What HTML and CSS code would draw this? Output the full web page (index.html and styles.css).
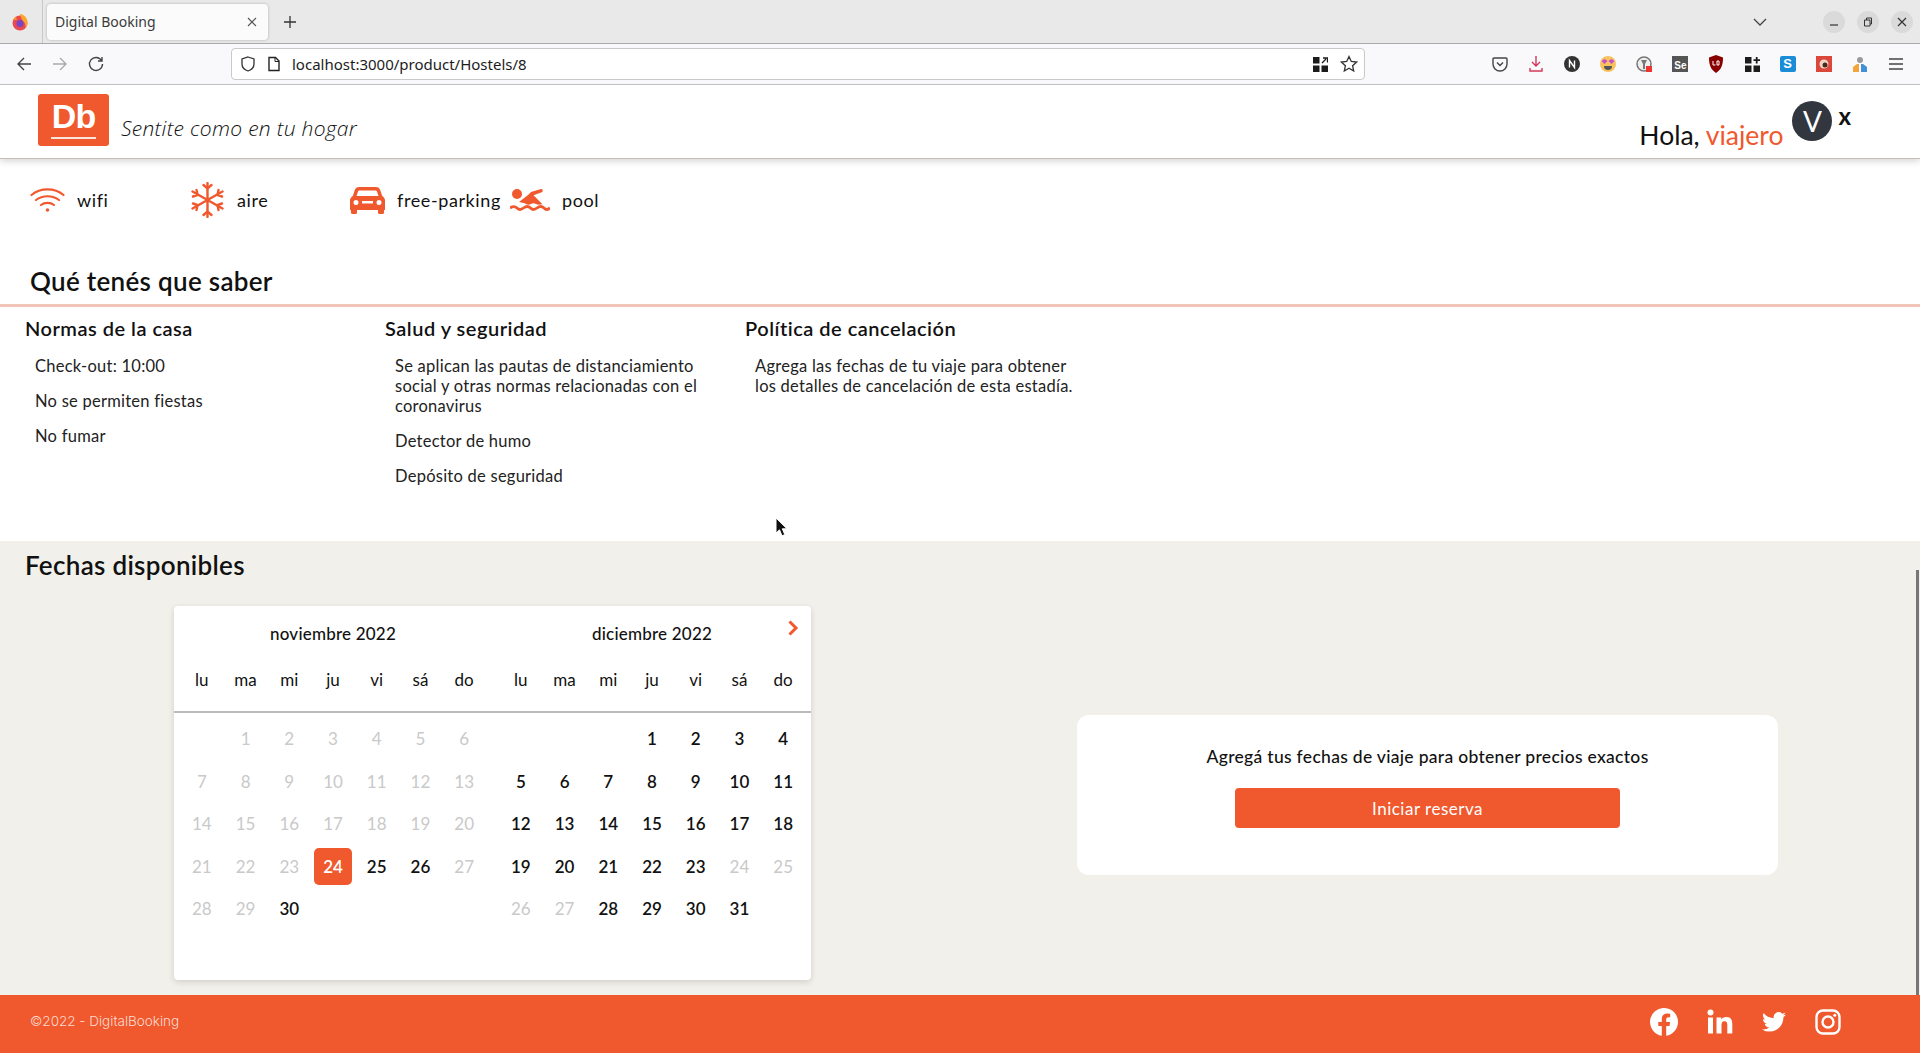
FILE: index.html
```html
<!DOCTYPE html>
<html lang="es">
<head>
    <meta charset="UTF-8">
    <meta name="viewport" content="width=device-width, initial-scale=1.0">
    <title>Digital Booking</title>
    <link rel="stylesheet" href="styles.css">
</head>
<body>
    <!-- browser chrome -->
    <div class="tabbar">
        <div class="tabbar-left">
            <svg class="ff-logo" width="20" height="20" viewBox="0 0 20 20"><circle cx="10" cy="11" r="7.5" fill="#e8484f"/><path d="M10 2c4.500 .5 7.500 4 7.500 9 0 2-1 4-2.500 5.300 1-2 .5-5-1.500-6.800C12 7.800 10.500 5 10 2z" fill="#ffa52c"/><path d="M3 8c1-2 2-3 3.500-4-.5 2 0 3 1 4z" fill="#ff8a2c"/><circle cx="10" cy="11.500" r="3.500" fill="#7a45c5"/></svg>
        </div>
        <div class="tab">
            <span class="tab-title">Digital Booking</span>
            <svg width="10" height="10" viewBox="0 0 10 10"><path d="M1 1l8 8M9 1l-8 8" stroke="#555" stroke-width="1.100"/></svg>
        </div>
        <svg class="new-tab" width="14" height="14" viewBox="0 0 14 14"><path d="M7 1v12M1 7h12" stroke="#333" stroke-width="1.300"/></svg>
        <div class="tabbar-right">
            <svg class="tabs-list" width="14" height="8" viewBox="0 0 14 8"><path d="M1 1l6 6 6-6" fill="none" stroke="#444" stroke-width="1.300"/></svg>
            <span class="win-btn"><svg width="10" height="10" viewBox="0 0 10 10"><path d="M1 8h8" stroke="#333" stroke-width="1.200"/></svg></span>
            <span class="win-btn"><svg width="10" height="10" viewBox="0 0 10 10"><path d="M1.500 3h5.500v6h-5.500zM3.500 3v-2h5v6h-1.500" fill="none" stroke="#333"/></svg></span>
            <span class="win-btn"><svg width="10" height="10" viewBox="0 0 10 10"><path d="M1 1l8 8M9 1l-8 8" stroke="#333" stroke-width="1.200"/></svg></span>
        </div>
    </div>

    <div class="toolbar">
        <div class="nav-btns">
            <svg width="16" height="16" viewBox="0 0 16 16"><path d="M15 8H2M8 2L2 8l6 6" fill="none" stroke="#444" stroke-width="1.400"/></svg>
            <svg width="16" height="16" viewBox="0 0 16 16"><path d="M1 8h13M8 2l6 6-6 6" fill="none" stroke="#aaa" stroke-width="1.400"/></svg>
            <svg width="16" height="16" viewBox="0 0 16 16"><path d="M13.500 4.500A6.500 6.500 0 1 0 14.500 8M14 1v4h-4" fill="none" stroke="#444" stroke-width="1.400"/></svg>
        </div>
        <div class="urlbar">
            <svg width="16" height="16" viewBox="0 0 16 16"><path d="M8 1l6 2v5c0 3.500-3 6-6 7-3-1-6-3.500-6-7V3z" fill="none" stroke="#333" stroke-width="1.300"/></svg>
            <svg width="14" height="16" viewBox="0 0 14 16"><path d="M2 1.500h6.500L12 5v9.500H2z" fill="none" stroke="#222" stroke-width="1.400"/><path d="M8 1.500V5.500h4" fill="none" stroke="#222"/></svg>
            <span class="url">localhost:3000/product/Hostels/8</span>
            <div class="urlbar-end">
                <svg width="15" height="15" viewBox="0 0 15 15" fill="#1c1c1c"><rect width="6.500" height="6.500"/><rect y="8.500" width="6.500" height="6.500"/><rect x="8.500" y="8.500" width="6.500" height="6.500"/><path d="M9 6l4-4M10 1h4.500v4.500" stroke="#1c1c1c" stroke-width="1.300" fill="none"/></svg>
                <svg width="18" height="18" viewBox="0 0 18 18"><path d="M9 1.500l2.300 5 5.300.6-4 3.600 1.100 5.300L9 13.300 4.300 16l1.100-5.300-4-3.600 5.300-.6z" fill="none" stroke="#333" stroke-width="1.300"/></svg>
            </div>
        </div>
        <div class="ext-icons">
            <svg width="16" height="16" viewBox="0 0 16 16"><path d="M2 2h12a1 1 0 0 1 1 1v5a7 7 0 0 1-14 0V3a1 1 0 0 1 1-1z" fill="none" stroke="#444" stroke-width="1.400"/><path d="M5 6.500l3 3 3-3" fill="none" stroke="#444" stroke-width="1.400"/></svg>
            <svg width="16" height="18" viewBox="0 0 16 18"><path d="M8 1v10M4 7l4 4 4-4M2 13v3h12v-3" fill="none" stroke="#d5385a" stroke-width="1.400"/></svg>
            <svg width="16" height="16" viewBox="0 0 16 16"><circle cx="8" cy="8" r="8" fill="#333"/><path d="M5.500 11.500v-7l5 7v-7" fill="none" stroke="#fff" stroke-width="1.400"/></svg>
            <svg width="16" height="16" viewBox="0 0 16 16"><circle cx="8" cy="8" r="8" fill="#f7c35f"/><path d="M1.500 5l3-2 3 2-3 3zM8.500 5l3-2 3 2-3 3z" fill="#c94fc9"/><path d="M4 10h8a4 4 0 0 1-8 0z" fill="#555"/></svg>
            <svg width="16" height="16" viewBox="0 0 16 16"><circle cx="8" cy="8" r="7" fill="#eee" stroke="#777" stroke-width="1.500"/><path d="M5 4h6l-2 4v5H7V8z" fill="#777"/><rect x="10" y="10" width="6" height="6" fill="#e33"/></svg>
            <span class="ext-se">Se</span>
            <svg width="16" height="18" viewBox="0 0 16 18"><path d="M8 0l7 2.500c0 7-1.500 12-7 15.500C2.500 14.500 1 9.500 1 2.500z" fill="#800"/><path d="M5 6v4h2.500M9 6h2v4H9z" fill="none" stroke="#fff" stroke-width="1"/></svg>
            <svg width="15" height="15" viewBox="0 0 15 15" fill="#1c1c1c"><rect width="6.500" height="6.500"/><rect y="8.500" width="6.500" height="6.500"/><rect x="8.500" y="8.500" width="6.500" height="6.500"/><path d="M11.700 0v6.500M8.500 3.200h6.500" stroke="#1c1c1c" stroke-width="1.800"/></svg>
            <span class="ext-s">S</span>
            <svg width="16" height="16" viewBox="0 0 16 16"><rect width="16" height="16" fill="#d9483b"/><circle cx="8" cy="8" r="4.500" fill="#f3d5c8"/><circle cx="9" cy="9" r="2.500" fill="#4a2a20"/></svg>
            <svg width="16" height="18" viewBox="0 0 16 18"><circle cx="8" cy="5" r="3" fill="#9a9a9a"/><path d="M1 17v-5l4-3h2v8z" fill="#f2a53a"/><path d="M15 17v-5l-4-3H9v8z" fill="#3f8fd9"/></svg>
            <svg width="16" height="12" viewBox="0 0 16 12"><path d="M1 1h14M1 6h14M1 11h14" stroke="#444" stroke-width="1.300"/></svg>
        </div>
    </div>

    <!-- app -->
    <header class="site-header">
        <div class="logo">
            <span class="logo-text">Db</span>
        </div>
        <span class="slogan">Sentite como en tu hogar</span>
        <div class="user">
            <span class="greeting">Hola, <span class="accent">viajero</span></span>
            <span class="avatar">V</span>
            <span class="logout">x</span>
        </div>
    </header>

    <main class="page">
        <section class="features">
            <div class="feature">
                <svg width="35" height="26" viewBox="0 0 35 26" fill="none" stroke="#f0582d" stroke-width="2.200" stroke-linecap="round"><path d="M1.500 8c9-7.500 23-7.500 32 0"/><path d="M6 13c6.500-5 16.500-5 23 0"/><path d="M11 18c3.500-2.800 9.500-2.800 13 0"/><circle cx="17.500" cy="23" r="1.800" fill="#f0582d" stroke="none"/></svg>
                <span>wifi</span>
            </div>
            <div class="feature">
                <svg width="35" height="36" viewBox="0 0 34 36" fill="none" stroke="#f0582d" stroke-width="2.400" stroke-linecap="round"><path d="M17 1v34M2 9.500l30 17M32 9.500l-30 17"/><path d="M13 3l4 3.500L21 3M13 33l4-3.500 4 3.500M2.500 14.500l4.500-1.500-1-5M31.500 14.500l-4.500-1.500 1-5M2.500 21.500l4.500 1.500-1 5M31.500 21.500l-4.500 1.500 1 5"/></svg>
                <span>aire</span>
            </div>
            <div class="feature">
                <svg width="35" height="28" viewBox="0 0 35 28" fill="#f0582d"><path fill-rule="evenodd" d="M9 1h17c2 0 3.500 1 4.200 3l2 6c1.500 1 2.800 2.500 2.800 4.500V24h-1v2.500a1.500 1.500 0 0 1-1.500 1.500h-3a1.500 1.500 0 0 1-1.500-1.500V24H7v2.500A1.500 1.500 0 0 1 5.500 28h-3A1.500 1.500 0 0 1 1 26.500V24H0v-9.500C0 12.500 1.300 11 2.800 10l2-6C5.500 2 7 1 9 1zm.5 3.500c-.8 0-1.300.4-1.500 1L6.500 10h22L27 5.500c-.2-.6-.7-1-1.500-1zM6 14a2.500 2.500 0 1 0 0 5 2.500 2.500 0 0 0 0-5zm23 0a2.500 2.500 0 1 0 0 5 2.500 2.500 0 0 0 0-5zm-17 1v2.500h11V15z"/></svg>
                <span>free-parking</span>
            </div>
            <div class="feature">
                <svg width="40" height="24" viewBox="0 0 40 24" fill="#f0582d"><circle cx="7" cy="6" r="5"/><path d="M9 14l9-7 3-3 10-3c1.500-.4 2.500 2.500.8 3.200l-8.300 3 9 9-4 .5c-2 0-3-1.500-5-1.500s-3 1.500-5 1.500-2-1-4-1.500z"/><path d="M0 20c3-2 5-2 7 0s4 2 6.500 0 5-2 7 0 4 2 6.500 0 5-2 7 0 3 2 6 0" fill="none" stroke="#f0582d" stroke-width="2.800"/></svg>
                <span>pool</span>
            </div>
        </section>

        <section class="policies">
            <h2 class="policies-title">Qué tenés que saber</h2>
            <div class="policies-cols">
                <div class="policy">
                    <h3>Normas de la casa</h3>
                    <p>Check-out: 10:00</p>
                    <p>No se permiten fiestas</p>
                    <p>No fumar</p>
                </div>
                <div class="policy">
                    <h3>Salud y seguridad</h3>
                    <p>Se aplican las pautas de distanciamiento social y otras normas relacionadas con el coronavirus</p>
                    <p>Detector de humo</p>
                    <p>Depósito de seguridad</p>
                </div>
                <div class="policy">
                    <h3>Política de cancelación</h3>
                    <p>Agrega las fechas de tu viaje para obtener los detalles de cancelación de esta estadía.</p>
                </div>
            </div>
            <svg class="mouse-cursor" width="13" height="20" viewBox="0 0 13 20"><path d="M1 1v15l3.500-3.200 2.500 6 2.800-1.200-2.500-5.800H12z" fill="#111" stroke="#fff" stroke-width="1"/></svg>
        </section>

        <section class="dates">
            <div class="scroll-thumb"></div>
            <h2 class="dates-title">Fechas disponibles</h2>
            <div class="dates-body">
                <div class="calendar">
                    <svg class="cal-next" width="12" height="16" viewBox="0 0 12 16"><path d="M2.500 1.500L9 8l-6.500 6.500" fill="none" stroke="#f0582d" stroke-width="3"/></svg>
                    <div class="cal-head">
                        <div class="month">
                            <div class="month-name">noviembre 2022</div>
                            <div class="weekdays"><span>lu</span><span>ma</span><span>mi</span><span>ju</span><span>vi</span><span>sá</span><span>do</span></div>
                        </div>
                        <div class="month">
                            <div class="month-name">diciembre 2022</div>
                            <div class="weekdays"><span>lu</span><span>ma</span><span>mi</span><span>ju</span><span>vi</span><span>sá</span><span>do</span></div>
                        </div>
                    </div>
                    <div class="cal-body">
                        <div class="days">
                            <span></span><span class="off">1</span><span class="off">2</span><span class="off">3</span><span class="off">4</span><span class="off">5</span><span class="off">6</span>
                            <span class="off">7</span><span class="off">8</span><span class="off">9</span><span class="off">10</span><span class="off">11</span><span class="off">12</span><span class="off">13</span>
                            <span class="off">14</span><span class="off">15</span><span class="off">16</span><span class="off">17</span><span class="off">18</span><span class="off">19</span><span class="off">20</span>
                            <span class="off">21</span><span class="off">22</span><span class="off">23</span><span class="today">24</span><span>25</span><span>26</span><span class="off">27</span>
                            <span class="off">28</span><span class="off">29</span><span>30</span>
                        </div>
                        <div class="days">
                            <span></span><span></span><span></span><span>1</span><span>2</span><span>3</span><span>4</span>
                            <span>5</span><span>6</span><span>7</span><span>8</span><span>9</span><span>10</span><span>11</span>
                            <span>12</span><span>13</span><span>14</span><span>15</span><span>16</span><span>17</span><span>18</span>
                            <span>19</span><span>20</span><span>21</span><span>22</span><span>23</span><span class="off">24</span><span class="off">25</span>
                            <span class="off">26</span><span class="off">27</span><span>28</span><span>29</span><span>30</span><span>31</span>
                        </div>
                    </div>
                </div>
                <div class="booking-card">
                    <p>Agregá tus fechas de viaje para obtener precios exactos</p>
                    <button class="btn-book">Iniciar reserva</button>
                </div>
            </div>
        </section>
    </main>

    <footer class="site-footer">
        <span class="copy">©2022 - DigitalBooking</span>
        <div class="socials">
            <svg width="28" height="28" viewBox="0 0 28 28"><path fill="#fff" d="M28 14a14 14 0 1 0-16.200 13.800v-9.800H8.300V14h3.500v-3.100c0-3.500 2.100-5.400 5.300-5.400 1.500 0 3.100.3 3.100.3v3.400h-1.800c-1.700 0-2.200 1.100-2.200 2.200V14h3.900l-.6 4h-3.300v9.800A14 14 0 0 0 28 14z"/></svg>
            <svg width="26" height="26" viewBox="0 0 26 26" fill="#fff"><circle cx="3.500" cy="3.500" r="3"/><rect x="1" y="8.500" width="5" height="16"/><path d="M9.500 8.500h4.800v2.200c.8-1.400 2.500-2.600 5-2.600 5 0 6 3.300 6 7.500v9h-5v-8c0-2-.1-4.400-2.700-4.400s-3.100 2-3.100 4.300v8.100h-5z"/></svg>
            <svg width="24" height="20" viewBox="0 0 24 20"><path fill="#fff" d="M24 2.400a9.800 9.800 0 0 1-2.800.8A5 5 0 0 0 23.300.5a9.800 9.800 0 0 1-3.100 1.200 4.900 4.900 0 0 0-8.400 4.500A14 14 0 0 1 1.700.9a4.900 4.900 0 0 0 1.500 6.600 4.900 4.900 0 0 1-2.200-.6c0 2.400 1.700 4.500 3.900 5a4.900 4.900 0 0 1-2.200.1 4.900 4.900 0 0 0 4.600 3.400A9.900 9.900 0 0 1 0 17.400 14 14 0 0 0 7.500 19.600c9.100 0 14.200-7.700 13.900-14.500A10 10 0 0 0 24 2.400z"/></svg>
            <svg width="26" height="26" viewBox="0 0 26 26" fill="none" stroke="#fff" stroke-width="2.400"><rect x="1.500" y="1.500" width="23" height="23" rx="6.500"/><circle cx="13" cy="13" r="5.500"/><circle cx="19.800" cy="6.200" r="1.500" fill="#fff" stroke="none"/></svg>
        </div>
    </footer>
</body>
</html>
```

FILE: styles.css
```css
* {
    margin: 0;
    padding: 0;
    box-sizing: border-box;
}

html, body {
    height: 100%;
    overflow: hidden;
}

body {
    display: flex;
    flex-direction: column;
    background-color: #fff;
    color: #111;
    font-family: "Lato", "Noto Sans", sans-serif;
}

/* browser chrome */
.tabbar {
    height: 44px;
    display: flex;
    align-items: center;
    background-color: #e9e9e9;
    border-bottom: 1px solid #aaa;
    flex-shrink: 0;
}

.tabbar-left {
    width: 43px;
    height: 43px;
    display: flex;
    align-items: center;
    padding-left: 10px;
    border-right: 1px solid #c8c8c8;
}

.tab {
    width: 221px;
    height: 36px;
    margin-left: 4px;
    padding: 0 11px 0 8px;
    display: flex;
    align-items: center;
    justify-content: space-between;
    background-color: #fbfbfb;
    border-radius: 4px;
    box-shadow: 0 0 3px rgba(0, 0, 0, 0.25);
}

.tab-title {
    font-family: "Noto Sans", sans-serif;
    font-size: 14px;
    color: #3a3a3a;
}

.new-tab {
    margin-left: 15px;
}

.tabbar-right {
    margin-left: auto;
    display: flex;
    align-items: center;
    gap: 12px;
    padding-right: 7px;
}

.tabs-list {
    margin-right: 44px;
}

.win-btn {
    width: 22px;
    height: 22px;
    display: flex;
    align-items: center;
    justify-content: center;
    border-radius: 50%;
    background-color: #dadada;
}

.toolbar {
    height: 41px;
    display: flex;
    align-items: center;
    background-color: #f9f9fb;
    border-bottom: 1px solid #c4c4c4;
    flex-shrink: 0;
}

.nav-btns {
    width: 231px;
    display: flex;
    gap: 20px;
    padding-left: 16px;
}

.urlbar {
    width: 1134px;
    height: 32px;
    display: flex;
    align-items: center;
    gap: 11px;
    padding: 0 6px 0 8px;
    background-color: #fff;
    border: 1px solid #c9c9c9;
    border-radius: 4px;
}

.url {
    font-family: "Noto Sans", sans-serif;
    font-size: 15px;
    color: #1c1c1c;
}

.urlbar-end {
    margin-left: auto;
    display: flex;
    align-items: center;
    gap: 12px;
}

.ext-icons {
    flex: 1;
    display: flex;
    align-items: center;
    justify-content: space-between;
    padding: 0 16px 0 127px;
}

.ext-se {
    width: 16px;
    height: 16px;
    padding-top: 4px;
    background-color: #555;
    color: #fff;
    font-family: "Liberation Sans", sans-serif;
    font-size: 10px;
    font-weight: 700;
    text-align: center;
}

.ext-s {
    width: 16px;
    height: 16px;
    background-color: #1a8cd8;
    border-radius: 2px;
    color: #fff;
    font-family: "Liberation Sans", sans-serif;
    font-size: 13px;
    font-weight: 700;
    text-align: center;
}

/* header */
.site-header {
    height: 74px;
    display: flex;
    align-items: flex-start;
    padding: 9px 0 0 38px;
    background-color: #fff;
    border-bottom: 1px solid #c8bcb6;
    box-shadow: 0 3px 6px rgba(0, 0, 0, 0.14);
    position: relative;
    flex-shrink: 0;
}

.logo {
    width: 71px;
    height: 52px;
    display: flex;
    justify-content: center;
    background-color: #f0582d;
    border-radius: 3px;
}

.logo-text {
    height: 40px;
    margin-top: 5px;
    border-bottom: 2px solid #fbe4dc;
    color: #fff;
    font-family: "Liberation Sans", sans-serif;
    font-size: 34px;
    font-weight: 700;
    line-height: 34px;
    letter-spacing: -1px;
    padding: 0 1px;
}

.slogan {
    margin: 21px 0 0 12px;
    font-family: "Open Sans", sans-serif;
    font-size: 21px;
    font-style: italic;
    font-weight: 300;
    line-height: 26px;
    letter-spacing: 0.3px;
}

.user {
    margin-left: auto;
    margin-right: 69px;
    display: flex;
    align-items: flex-start;
}

.greeting {
    margin-top: 25px;
    font-size: 26.500px;
    line-height: 32px;
}

.accent {
    color: #f0582d;
}

.avatar {
    width: 40px;
    height: 40px;
    margin: 7px 0 0 9px;
    display: flex;
    align-items: center;
    justify-content: center;
    border-radius: 50%;
    background-color: #31363f;
    color: #fff;
    font-size: 28px;
}

.logout {
    margin: 11px 0 0 6px;
    font-size: 24px;
    font-weight: 700;
    line-height: 22px;
}

/* page */
.page {
    flex: 1;
    display: flex;
    flex-direction: column;
    min-height: 0;
}

.features {
    height: 100px;
    display: flex;
    align-items: flex-start;
    padding: 21px 0 0 30px;
}

.feature {
    width: 160px;
    height: 40px;
    display: flex;
    align-items: center;
    gap: 12px;
    font-size: 18px;
    letter-spacing: 0.6px;
    white-space: nowrap;
}

.policies {
    height: 282px;
    position: relative;
}

.mouse-cursor {
    position: absolute;
    top: 258px;
    left: 775px;
}

.policies-title {
    margin-left: 30px;
    height: 45px;
    font-size: 26px;
    font-weight: 600;
    line-height: 45px;
    letter-spacing: 0.3px;
}

.policies-cols {
    display: flex;
    border-top: 3px solid #f0c4b6;
    padding: 8px 0 0 25px;
}

.policy {
    width: 360px;
}

.policy h3 {
    margin-bottom: 14px;
    font-size: 20px;
    font-weight: 600;
    line-height: 27px;
    letter-spacing: 0.5px;
}

.policy p {
    width: 325px;
    margin: 0 0 15px 10px;
    font-size: 16.500px;
    line-height: 20px;
    letter-spacing: 0.25px;
    color: #222;
}

.dates {
    flex: 1;
    position: relative;
    padding: 8px 0 0 25px;
    background-color: #f1f0eb;
}

.scroll-thumb {
    position: absolute;
    top: 29px;
    right: 1px;
    bottom: 0;
    width: 3px;
    background-color: #777;
}

.dates-title {
    height: 36px;
    font-size: 26px;
    font-weight: 600;
    line-height: 32px;
    letter-spacing: 0.3px;
}

.dates-body {
    position: relative;
}

.calendar {
    width: 637px;
    height: 374px;
    margin: 21px 0 0 149px;
    position: relative;
    background-color: #fff;
    border-radius: 4px;
    box-shadow: 0 2px 6px rgba(0, 0, 0, 0.14);
}

.cal-next {
    position: absolute;
    top: 14px;
    right: 12px;
}

.cal-head {
    height: 107px;
    display: flex;
    gap: 13px;
    padding: 0 6px;
    border-bottom: 2px solid #bbb;
}

.cal-body {
    display: flex;
    gap: 13px;
    padding: 0 6px;
}

.month, .days {
    width: 306px;
}

.month-name {
    height: 28px;
    margin-top: 14px;
    text-align: center;
    font-size: 17px;
    font-weight: 500;
    line-height: 28px;
    letter-spacing: 0.2px;
}

.weekdays {
    display: grid;
    grid-template-columns: repeat(7, 1fr);
    margin-top: 20px;
    text-align: center;
    font-size: 17px;
    line-height: 24px;
}

.days {
    display: grid;
    grid-template-columns: repeat(7, 1fr);
    grid-auto-rows: 42.500px;
    margin-top: 4.500px;
    text-align: center;
    font-size: 17px;
    font-weight: 600;
}

.days span {
    display: flex;
    align-items: center;
    justify-content: center;
    color: #111;
}

.days .off {
    font-weight: 400;
    color: #c9c9c9;
}

.days .today {
    margin: 3px;
    background-color: #f0582d;
    border-radius: 5px;
    color: #fff;
}

.booking-card {
    position: absolute;
    top: 109px;
    left: 1052px;
    width: 701px;
    height: 160px;
    display: flex;
    flex-direction: column;
    align-items: center;
    padding-top: 30px;
    background-color: #fff;
    border-radius: 12px;
}

.booking-card p {
    font-size: 17.500px;
    font-weight: 500;
    line-height: 24px;
    letter-spacing: 0.3px;
}

.btn-book {
    width: 385px;
    height: 40px;
    margin-top: 19px;
    border: none;
    border-radius: 4px;
    background-color: #f0582d;
    color: #fff;
    cursor: pointer;
    font-family: inherit;
    font-size: 17px;
    letter-spacing: 0.5px;
}

/* footer */
.site-footer {
    height: 58px;
    display: flex;
    align-items: center;
    padding: 0 79px 4px 30px;
    background-color: #f0582d;
    color: #fbdccf;
    flex-shrink: 0;
}

.copy {
    margin-bottom: 2px;
    font-family: "Inter", sans-serif;
    font-size: 13.500px;
    font-weight: 300;
}

.socials {
    margin-left: auto;
    display: flex;
    align-items: center;
    gap: 29px;
}
```
